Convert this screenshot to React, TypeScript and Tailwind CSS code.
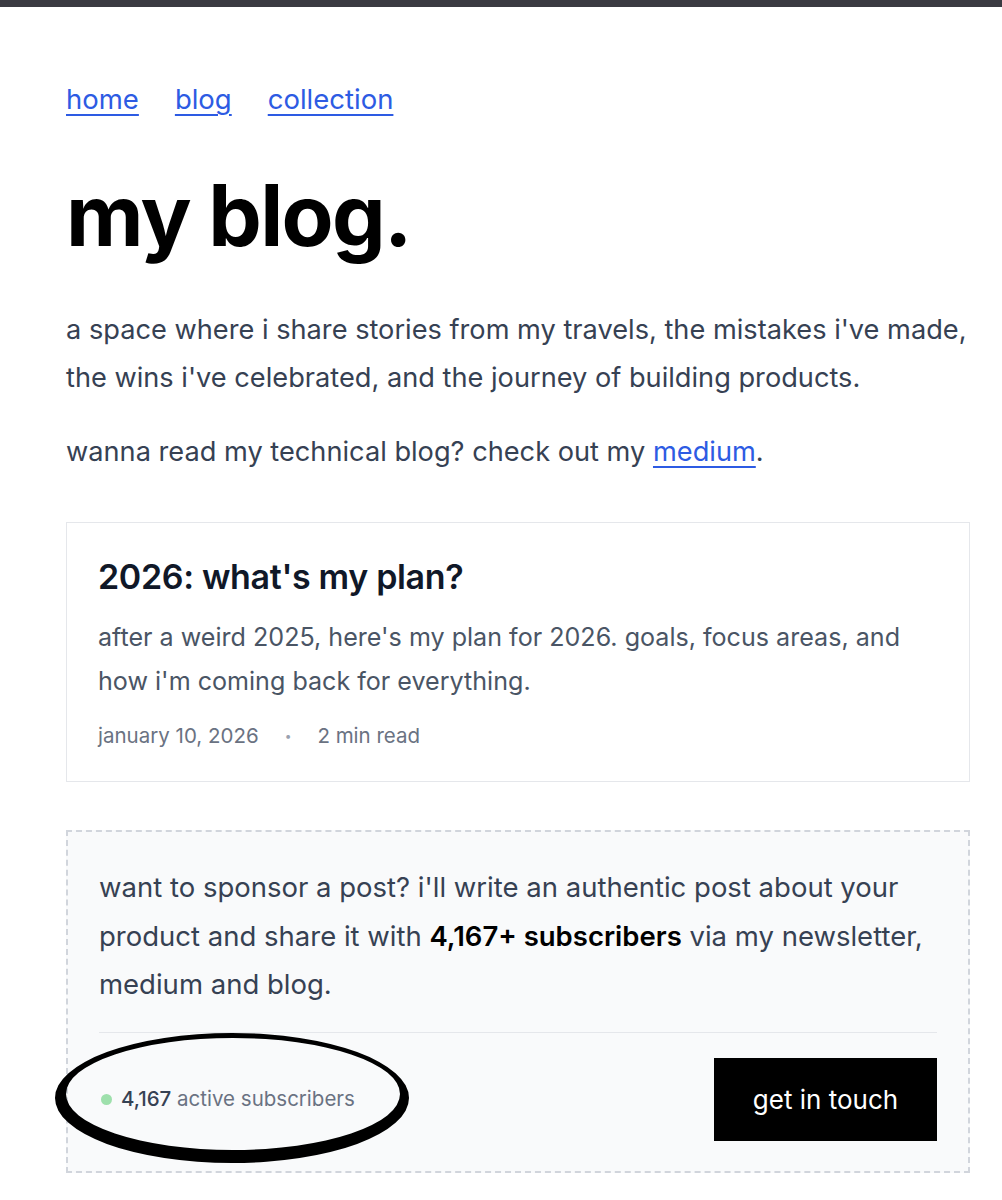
export default function App() {
  return (
    <div className="relative min-h-[1200px] bg-white font-['Inter','Noto_Sans',sans-serif] overflow-hidden">
      <div className="h-[7px] bg-[#3a3a41]" />

      <div className="ml-[66px] w-[904px] pt-[75px]">
        {/* nav */}
        <nav className="flex gap-[36px] text-[27.5px] leading-[34px] text-[#2d5be3]">
          <a href="#" className="underline decoration-2 underline-offset-[5px]">home</a>
          <a href="#" className="underline decoration-2 underline-offset-[5px]">blog</a>
          <a href="#" className="underline decoration-2 underline-offset-[5px]">collection</a>
        </nav>

        <h1 className="mt-[57px] text-[85px] leading-none font-bold tracking-[-0.02em] text-black">
          my blog.
        </h1>

        <p className="mt-[48px] text-[27.2px] leading-[48px] text-gray-700 whitespace-nowrap">
          a space where i share stories from my travels, the mistakes i've made,
          <br />
          the wins i've celebrated, and the journey of building products.
        </p>
        <p className="mt-[26px] text-[27.2px] leading-[48px] text-gray-700">
          wanna read my technical blog? check out my{" "}
          <a href="#" className="text-[#2d5be3] underline decoration-2 underline-offset-[5px]">medium</a>.
        </p>

        {/* post card */}
        <div className="mt-[46px] border border-gray-200 px-[31px] pt-[34px] pb-[31px]">
          <h2 className="text-[34px] leading-[40px] font-semibold text-gray-900 tracking-[-0.01em]">
            2026: what's my plan?
          </h2>
          <p className="mt-[18px] text-[25.1px] leading-[44px] text-gray-600 whitespace-nowrap">
            after a weird 2025, here's my plan for 2026. goals, focus areas, and
            <br />
            how i'm coming back for everything.
          </p>
          <div className="mt-[19px] flex items-center gap-[26px] text-[20.5px] leading-[28px] text-gray-500">
            <span>january 10, 2026</span>
            <span className="text-gray-400 text-[12px]">•</span>
            <span>2 min read</span>
          </div>
        </div>

        {/* sponsor box */}
        <div className="mt-[48px] border-2 border-dashed border-gray-300 bg-gray-50 px-[31px] pt-[31px] pb-[30px]">
          <p className="text-[27.5px] leading-[48.5px] text-gray-700 whitespace-nowrap">
            want to sponsor a post? i'll write an authentic post about your
            <br />
            product and share it with{" "}
            <span className="font-semibold text-black">4,167+ subscribers</span> via my newsletter,
            <br />
            medium and blog.
          </p>
          <div className="mt-[23px] h-px bg-gray-200" />
          <div className="mt-[25px] flex items-center justify-between">
            <div className="flex items-center gap-[9px] pl-[2px] text-[20.5px]">
              <span className="h-[11px] w-[11px] rounded-full bg-[#9ee0ac]" />
              <span>
                <span className="font-medium text-gray-700">4,167</span>{" "}
                <span className="text-gray-500">active subscribers</span>
              </span>
            </div>
            <button className="h-[83px] w-[223px] bg-black text-[26px] text-white">
              get in touch
            </button>
          </div>
        </div>
      </div>

      {/* hand-drawn annotation ellipse */}
      <svg
        className="absolute left-0 top-0 pointer-events-none"
        width="1002"
        height="1200"
        viewBox="0 0 1002 1200"
      >
        <path
          fillRule="evenodd"
          fill="black"
          d="M55 1098 A177 65 0 1 0 409 1098 A177 65 0 1 0 55 1098 Z M66 1094 A167 56 0 1 0 400 1094 A167 56 0 1 0 66 1094 Z"
        />
      </svg>
    </div>
  );
}
